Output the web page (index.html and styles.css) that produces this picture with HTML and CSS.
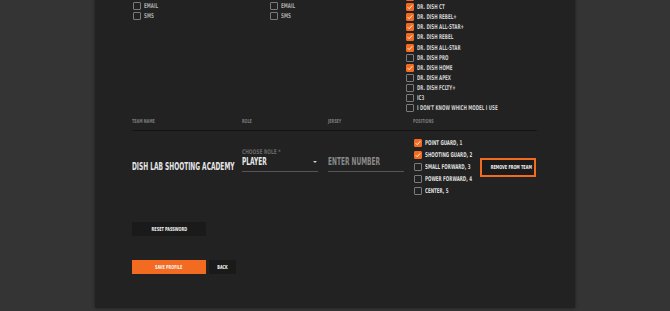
FILE: index.html
```html
<!DOCTYPE html>
<html>
<head>
<meta charset="utf-8">
<link rel="stylesheet" href="styles.css">
</head>
<body>
<div class="panel">
  <div class="prefs">
    <div class="pref-col contact">
      <div class="check"><span class="box"></span><span class="lbl">EMAIL</span></div>
      <div class="check"><span class="box"></span><span class="lbl">SMS</span></div>
    </div>
    <div class="pref-col contact">
      <div class="check"><span class="box"></span><span class="lbl">EMAIL</span></div>
      <div class="check"><span class="box"></span><span class="lbl">SMS</span></div>
    </div>
    <div class="pref-col models">
      <div class="check"><span class="box on"><svg viewBox="0 0 8 8"><polyline points="1.6,4.1 3.2,5.7 6.4,2.2"/></svg></span><span class="lbl">DR. DISH CT+</span></div>
      <div class="check"><span class="box on"><svg viewBox="0 0 8 8"><polyline points="1.6,4.1 3.2,5.7 6.4,2.2"/></svg></span><span class="lbl">DR. DISH CT</span></div>
      <div class="check"><span class="box on"><svg viewBox="0 0 8 8"><polyline points="1.6,4.1 3.2,5.7 6.4,2.2"/></svg></span><span class="lbl">DR. DISH REBEL+</span></div>
      <div class="check"><span class="box on"><svg viewBox="0 0 8 8"><polyline points="1.6,4.1 3.2,5.7 6.4,2.2"/></svg></span><span class="lbl">DR. DISH ALL-STAR+</span></div>
      <div class="check"><span class="box on"><svg viewBox="0 0 8 8"><polyline points="1.6,4.1 3.2,5.7 6.4,2.2"/></svg></span><span class="lbl">DR. DISH REBEL</span></div>
      <div class="check"><span class="box on"><svg viewBox="0 0 8 8"><polyline points="1.6,4.1 3.2,5.7 6.4,2.2"/></svg></span><span class="lbl">DR. DISH ALL-STAR</span></div>
      <div class="check"><span class="box"></span><span class="lbl">DR. DISH PRO</span></div>
      <div class="check"><span class="box on"><svg viewBox="0 0 8 8"><polyline points="1.6,4.1 3.2,5.7 6.4,2.2"/></svg></span><span class="lbl">DR. DISH HOME</span></div>
      <div class="check"><span class="box"></span><span class="lbl">DR. DISH APEX</span></div>
      <div class="check"><span class="box"></span><span class="lbl">DR. DISH FCLTY+</span></div>
      <div class="check"><span class="box"></span><span class="lbl">IC3</span></div>
      <div class="check"><span class="box"></span><span class="lbl">I DON'T KNOW WHICH MODEL I USE</span></div>
    </div>
  </div>

  <div class="team-head">
    <div><span class="t">TEAM NAME</span></div>
    <div><span class="t">ROLE</span></div>
    <div><span class="t">JERSEY</span></div>
    <div><span class="t">POSITIONS</span></div>
  </div>

  <div class="team-row">
    <div class="team-name"><span class="t">DISH LAB SHOOTING ACADEMY</span></div>
    <div class="field">
      <div class="field-label"><span class="t">CHOOSE ROLE *</span></div>
      <div class="select"><span class="t">PLAYER</span><span class="caret"></span></div>
    </div>
    <div class="field">
      <div class="field-label"></div>
      <div class="placeholder"><span class="t">ENTER NUMBER</span></div>
    </div>
    <div class="positions">
      <div class="check"><span class="box on"><svg viewBox="0 0 8 8"><polyline points="1.6,4.1 3.2,5.7 6.4,2.2"/></svg></span><span class="lbl">POINT GUARD, 1</span></div>
      <div class="check"><span class="box on"><svg viewBox="0 0 8 8"><polyline points="1.6,4.1 3.2,5.7 6.4,2.2"/></svg></span><span class="lbl">SHOOTING GUARD, 2</span></div>
      <div class="check"><span class="box"></span><span class="lbl">SMALL FORWARD, 3</span></div>
      <div class="check"><span class="box"></span><span class="lbl">POWER FORWARD, 4</span></div>
      <div class="check"><span class="box"></span><span class="lbl">CENTER, 5</span></div>
    </div>
    <div class="remove-cell"><button class="btn remove"><span class="tc">REMOVE FROM TEAM</span></button></div>
  </div>

  <div class="actions reset-row">
    <button class="btn dark wide"><span class="tc">RESET PASSWORD</span></button>
  </div>
  <div class="actions save-row">
    <button class="btn orange wide"><span class="tc">SAVE PROFILE</span></button>
    <button class="btn dark back"><span class="tc">BACK</span></button>
  </div>
</div>
</body>
</html>
```

FILE: styles.css
```css
html, body {
  margin: 0;
  padding: 0;
  background: #343434;
  height: 311px;
  overflow: hidden;
}

body {
  font-family: "DejaVu Sans Condensed", "Liberation Sans", sans-serif;
  font-weight: bold;
}

.t,
.lbl {
  display: inline-block;
  white-space: nowrap;
  transform: scaleX(0.68);
  transform-origin: left center;
}

.tc {
  display: inline-block;
  white-space: nowrap;
  transform: scaleX(0.7);
  transform-origin: center center;
}

.panel {
  width: 480px;
  box-sizing: border-box;
  margin: -8px auto 0;
  padding: 0 38px 34px 37px;
  background: #222222;
  box-shadow: 0 0 3px rgba(0, 0, 0, 0.45);
}

.prefs {
  display: grid;
  grid-template-columns: 137px 137px 1fr;
}

.pref-col.contact {
  padding-top: 9px;
  padding-left: 1px;
}

.check {
  display: flex;
  align-items: center;
  gap: 3px;
  height: 10.1px;
}

.box {
  box-sizing: border-box;
  width: 8px;
  height: 8px;
  border: 1px solid #7a7a7a;
  border-radius: 1px;
  flex: none;
  display: flex;
}

.box.on {
  background: #f26b21;
  border-color: #f26b21;
}

.box svg {
  width: 8px;
  height: 8px;
  margin: -1px;
}

.box polyline {
  fill: none;
  stroke: #ffffff;
  stroke-width: 0.9;
}

.lbl {
  font-size: 6.6px;
  line-height: 8px;
  color: #cfcfcf;
}

.contact .lbl {
  color: #a8a8a8;
}

.team-head {
  display: grid;
  grid-template-columns: 110px 86px 85px 1fr;
  padding: 4px 0 5px;
  border-bottom: 1px solid #151515;
  font-size: 5.5px;
  line-height: 8px;
  color: #7c7c7c;
}

.team-row {
  display: grid;
  grid-template-columns: 110px 86px 86px 66px 1fr;
  align-items: center;
  padding-top: 6px;
}

.team-name {
  font-size: 9.6px;
  line-height: 12px;
  color: #e6e6e6;
  white-space: nowrap;
}

.field {
  width: 76px;
  align-self: start;
  margin-top: 12px;
  border-bottom: 1px solid #555555;
  padding-bottom: 3px;
}

.field-label {
  height: 7px;
  font-size: 6.4px;
  line-height: 7px;
  color: #666666;
}

.field-label .t {
  transform: scaleX(0.76);
}

.select {
  position: relative;
  font-size: 9.6px;
  line-height: 12px;
  color: #e8e8e8;
}

.caret {
  position: absolute;
  right: 1px;
  top: 5px;
  width: 0;
  height: 0;
  border-left: 2.5px solid transparent;
  border-right: 2.5px solid transparent;
  border-top: 2.5px solid #cfcfcf;
}

.placeholder {
  font-size: 9.6px;
  line-height: 12px;
  color: #8a8a8a;
}

.positions .check {
  height: 12px;
}

.positions .lbl {
  color: #dedede;
}

.remove-cell {
  display: flex;
}

.btn {
  font-family: inherit;
  font-weight: bold;
  font-size: 5.5px;
  color: #f2f2f2;
  border: none;
  padding: 0;
  margin: 0;
  height: 14px;
  line-height: 14px;
  text-align: center;
  white-space: nowrap;
  overflow: visible;
}

.btn.remove {
  box-sizing: border-box;
  width: 56px;
  height: 19px;
  border: 2px solid #f26b21;
  background: #1b1b1b;
  line-height: 15px;
}

.actions {
  display: flex;
  gap: 3px;
}

.reset-row {
  margin-top: 25px;
}

.save-row {
  margin-top: 24px;
}

.btn.dark {
  background: #1a1a1a;
}

.btn.orange {
  background: #f26b21;
}

.btn.wide {
  width: 74px;
}

.btn.back {
  width: 27px;
}
```
